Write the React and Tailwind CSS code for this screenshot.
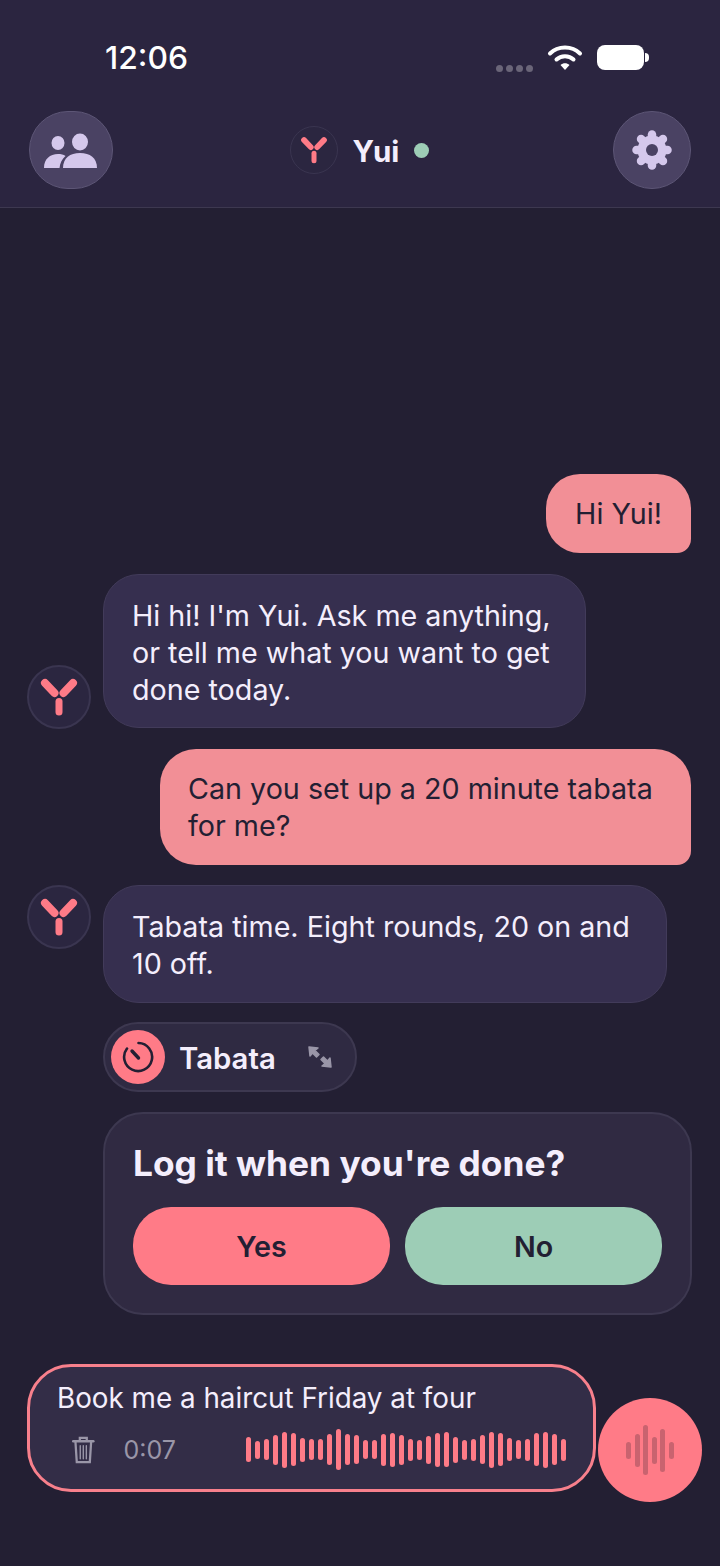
import React from 'react';

const waveBars = [25, 18, 21, 30, 36, 33, 24, 21, 21, 31, 41, 31, 29, 19, 19, 32, 34, 30, 22, 20, 28, 34, 35, 26, 20, 22, 29, 36, 33, 23, 19, 22, 33, 36, 31, 22];
const micBars = [17, 33, 50, 27, 43, 17];
const gearTeeth = [0, 45, 90, 135, 180, 225, 270, 315];

const YuiLogo = ({ size }) => (
    <svg width={size} height={size} viewBox="0 0 42 42" fill="none" stroke="#ff7b87" strokeLinecap="round">
        <path d="M7 7 L16.500 17" strokeWidth="8" />
        <path d="M35 7 L25.500 17" strokeWidth="8" />
        <path d="M21 25.500 L21 36" strokeWidth="7" />
    </svg>
);

const App = () => {
    return (
        <div className="w-[720px] h-[1566px] bg-[#231f33] flex flex-col font-[Inter,sans-serif] overflow-hidden">
            <header className="h-[208px] shrink-0 bg-[#2b2540] border-b border-[#3d3850]">
                <div className="h-[111px] pl-[105px] pr-[71px] pt-[38px] flex justify-between">
                    <span className="text-[31.800px] leading-[40px] font-medium text-white">12:06</span>
                    <div className="flex items-start">
                        <div className="flex gap-[3px] mt-[27px] mr-[14px]">
                            <span className="w-[7px] h-[7px] rounded-full bg-[#6a6578]" />
                            <span className="w-[7px] h-[7px] rounded-full bg-[#6a6578]" />
                            <span className="w-[7px] h-[7px] rounded-full bg-[#6a6578]" />
                            <span className="w-[7px] h-[7px] rounded-full bg-[#6a6578]" />
                        </div>
                        <svg width="36" height="28" viewBox="0 0 36 28" fill="none" className="mt-[6px] mr-[14px]">
                            <path d="M3 9.500 C11 1.500 25 1.500 33 9.500" stroke="white" strokeWidth="4" strokeLinecap="round" />
                            <path d="M9.500 15.500 C14 11 22 11 26.500 15.500" stroke="white" strokeWidth="4" strokeLinecap="round" />
                            <path d="M13.500 21 C16 18.500 20 18.500 22.500 21 L18 26 Z" fill="white" />
                        </svg>
                        <div className="w-[47px] h-[25px] mt-[7px] rounded-[8px] bg-white" />
                        <div className="w-[4px] h-[9px] mt-[15px] ml-px rounded-r-full bg-white" />
                    </div>
                </div>
                <div className="pl-[29px] pr-[29px] flex items-center justify-between">
                    <button className="w-[84px] h-[78px] rounded-full bg-[#4a4263] border border-[#5d5676] flex items-center justify-center">
                        <svg width="54" height="36" viewBox="0 0 54 36" fill="#d5c8ec">
                            <ellipse cx="14" cy="11" rx="6.500" ry="7" />
                            <ellipse cx="36" cy="10" rx="8" ry="8.500" />
                            <path d="M0 36 C0 27 6 22 14 22 C17 22 19.500 22.500 21.500 24 C18 27 16 31 15.500 36 Z" />
                            <path d="M19 36 C19 26 26 21 36 21 C46 21 53 26 53 36 Z" />
                        </svg>
                    </button>
                    <div className="flex items-center mr-[7px]">
                        <div className="w-[48px] h-[48px] rounded-full bg-[#2b2640] border border-[#3a3550] flex items-center justify-center">
                            <YuiLogo size={30} />
                        </div>
                        <span className="ml-[15px] pt-[2px] text-[29.500px] leading-[36px] font-bold text-[#f4eefc]">Yui</span>
                        <span className="ml-[15px] w-[15px] h-[15px] rounded-full bg-[#9dcdb6]" />
                    </div>
                    <button className="w-[78px] h-[78px] rounded-full bg-[#4a4263] border border-[#5d5676] flex items-center justify-center">
                        <svg width="44" height="44" viewBox="0 0 44 44">
                            <circle cx="22" cy="22" r="14.500" fill="#d5c8ec" />
                            {gearTeeth.map(a => (
                                <path key={a} d="M22 8 V6.500" stroke="#d5c8ec" strokeWidth="8.500" strokeLinecap="round" transform={`rotate(${a} 22 22)`} />
                            ))}
                            <circle cx="22" cy="22" r="6" fill="#4a4263" />
                        </svg>
                    </button>
                </div>
            </header>

            <main className="flex-1 flex flex-col pt-[266px]">
                <div className="self-end mr-[29px] w-[145px] h-[79px] flex items-center justify-center rounded-[34px] rounded-br-[14px] bg-[#f28f96] text-[#231f33] text-[28.700px] leading-[37px]">
                    Hi Yui!
                </div>

                <div className="mt-[21px] ml-[27px] flex items-end gap-[12px]">
                    <div className="w-[64px] h-[64px] -mb-px shrink-0 rounded-full bg-[#2b2640] border-2 border-[#3a3550] flex items-center justify-center">
                        <YuiLogo size={42} />
                    </div>
                    <div className="w-[483px] h-[154px] px-[28px] py-[22px] rounded-[36px] bg-[#362f4f] border border-[#423b5a] text-[#f4eefc] text-[28.700px] leading-[37px]">
                        Hi hi! I'm Yui. Ask me anything, or tell me what you want to get done today.
                    </div>
                </div>

                <div className="self-end mt-[21px] mr-[29px] w-[531px] h-[116px] px-[28px] py-[21px] rounded-[36px] rounded-br-[14px] bg-[#f28f96] text-[#231f33] text-[28.700px] leading-[37px]">
                    Can you set up a 20 minute tabata for me?
                </div>

                <div className="mt-[20px] ml-[27px] flex items-start gap-[12px]">
                    <div className="w-[64px] h-[64px] shrink-0 rounded-full bg-[#2b2640] border-2 border-[#3a3550] flex items-center justify-center">
                        <YuiLogo size={42} />
                    </div>
                    <div className="w-[564px] h-[118px] px-[28px] py-[22px] rounded-[36px] bg-[#362f4f] border border-[#423b5a] text-[#f4eefc] text-[28.700px] leading-[37px]">
                        Tabata time. Eight rounds, 20 on and 10 off.
                    </div>
                </div>

                <div className="mt-[19px] ml-[103px] w-[254px] h-[70px] pl-[6px] flex items-center rounded-full bg-[#2f2a42] border-2 border-[#3d3850]">
                    <div className="w-[54px] h-[54px] rounded-full bg-[#ff7b87] flex items-center justify-center">
                        <svg width="32" height="32" viewBox="0 0 32 32" fill="none" stroke="#231f33" strokeWidth="2.600" strokeLinecap="round">
                            <path d="M16.500 2 A14 14 0 1 1 5 7.500" />
                            <path d="M10 10 L16.500 17" strokeWidth="3.400" />
                        </svg>
                    </div>
                    <span className="ml-[14px] pt-[3px] text-[29.300px] leading-[36px] font-semibold text-[#f4eefc]">Tabata</span>
                    <svg width="26" height="24" viewBox="0 0 26 24" fill="#9a96a8" stroke="#9a96a8" strokeWidth="1.500" strokeLinejoin="round" className="ml-[31px]">
                        <path d="M2 2 L11 3 L8 5.500 L12 9.500 L9.500 12 L5.500 8 L3 11 Z" />
                        <path d="M24 22 L15 21 L18 18.500 L14 14.500 L16.500 12 L20.500 16 L23 13 Z" />
                    </svg>
                </div>

                <div className="mt-[20px] ml-[103px] w-[589px] h-[203px] px-[28px] pt-[28px] rounded-[40px] bg-[#302a42] border-2 border-[#3d3850]">
                    <p className="text-[35.300px] leading-[44px] font-bold text-[#f4eefc]">Log it when you're done?</p>
                    <div className="mt-[21px] flex gap-[15px]">
                        <button className="flex-1 h-[78px] pt-[2px] rounded-[38px] bg-[#ff7b87] text-[#231f33] text-[28.700px] font-semibold">Yes</button>
                        <button className="flex-1 h-[78px] pt-[2px] rounded-[38px] bg-[#9dcdb6] text-[#231f33] text-[28.700px] font-semibold">No</button>
                    </div>
                </div>

                <div className="mt-[49px] ml-[27px] flex items-start gap-[2px]">
                    <div className="w-[569px] h-[128px] pl-[27px] pr-[27px] pt-[13px] rounded-[44px] bg-[#332d47] border-[3px] border-[#f8808c]">
                        <p className="text-[27.800px] leading-[37px] text-[#f4eefc]">Book me a haircut Friday at four</p>
                        <div className="mt-[12px] flex items-center">
                            <svg width="26" height="32" viewBox="0 0 26 32" fill="none" stroke="#9a96a8" strokeWidth="2.600" strokeLinecap="round" className="ml-[15px]">
                                <path d="M1.500 6 H24.500" strokeWidth="3" />
                                <path d="M9 5 V2 H17 V5" />
                                <path d="M4 7 L5.500 30 H20.500 L22 7" />
                                <path d="M9.500 11 V26 M13 11 V26 M16.500 11 V26" strokeWidth="1.600" />
                            </svg>
                            <span className="ml-[29px] text-[25px] leading-[30px] text-[#9a96a8]">0:07</span>
                            <div className="ml-[70px] flex items-center gap-[4px]">
                                {waveBars.map((h, i) => (
                                    <span key={i} className="w-[5px] rounded-full bg-[#ff7b87]" style={{ height: h }} />
                                ))}
                            </div>
                        </div>
                    </div>
                    <div className="w-[104px] h-[104px] mt-[34px] rounded-full bg-[#ff7b87] flex items-center justify-center gap-[3.500px]">
                        {micBars.map((h, i) => (
                            <span key={i} className="w-[5px] rounded-full bg-[#c9636f]" style={{ height: h }} />
                        ))}
                    </div>
                </div>
            </main>
        </div>
    );
};

export default App;
